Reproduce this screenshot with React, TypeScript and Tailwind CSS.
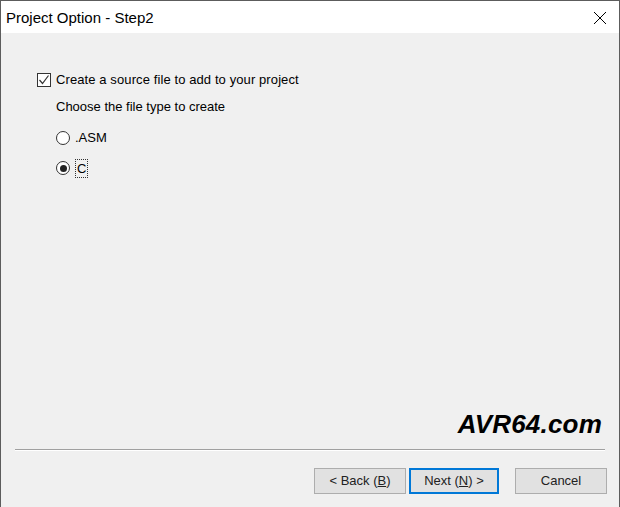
export default function App() {
  return (
    <div className="w-[620px] h-[507px] flex flex-col bg-[#f0f0f0] border-l border-r border-t border-[#5c5c5c] font-['Liberation_Sans',sans-serif] text-[12px] text-black overflow-hidden">
      {/* Title bar */}
      <div className="h-[32px] shrink-0 bg-white flex items-center justify-between pl-[5px] pr-[12px]">
        <span className="text-[15px] font-['Liberation_Sans',sans-serif] leading-none">Project Option - Step2</span>
        <svg width="14" height="14" viewBox="0 0 14 14" className="mt-[1px]">
          <path d="M1 1 L13 13 M13 1 L1 13" stroke="#000" strokeWidth="1" fill="none" />
        </svg>
      </div>

      {/* Body */}
      <div className="flex-1 flex flex-col">
        <div className="pl-[36px] pt-[38px] flex flex-col">
          <label className="flex items-center gap-[5px] h-[18px]">
            <span className="w-[14px] h-[14px] border border-[#333] bg-white flex items-center justify-center">
              <svg width="12" height="12" viewBox="0 0 12 12">
                <path d="M1.5 6 L4.5 9.5 L10.5 1.5" stroke="#333" strokeWidth="1.2" fill="none" />
              </svg>
            </span>
            <span className="text-[13px] tracking-[0.1px]">Create a source file to add to your project</span>
          </label>

          <div className="pl-[19px] mt-[9px] text-[13px] h-[18px] flex items-center">Choose the file type to create</div>

          <div className="pl-[19px] mt-[12px] flex items-center gap-[5px] h-[20px]">
            <span className="w-[14px] h-[14px] rounded-full border border-[#333] bg-white" />
            <span className="text-[13px]">.ASM</span>
          </div>

          <div className="pl-[19px] mt-[10px] flex items-center gap-[5px] h-[20px]">
            <span className="w-[14px] h-[14px] rounded-full border border-[#333] bg-white flex items-center justify-center">
              <span className="w-[7px] h-[7px] rounded-full bg-[#222]" />
            </span>
            <span className="text-[13px] border border-dotted border-[#333] px-[1px] leading-[17px]">C</span>
          </div>
        </div>

        <div className="flex-1" />

        {/* Watermark */}
        <div className="flex justify-end pr-[17px]">
          <span className="font-['Liberation_Sans',sans-serif] font-bold italic text-[26px] leading-none tracking-[0.2px]">AVR64.com</span>
        </div>

        {/* Separator */}
        <div className="mx-[14px] mt-[12px] border-t border-[#a0a0a0] border-b border-b-white" />

        {/* Buttons */}
        <div className="flex justify-end pr-[12px] pt-[17px] pb-[13px] gap-[3px]">
          <button className="w-[92px] h-[26px] bg-[#e1e1e1] border border-[#adadad] text-[13px] text-[#222]">
            &lt; Back (<span className="underline">B</span>)
          </button>
          <button className="w-[90px] h-[26px] bg-[#e1e1e1] border-2 border-[#0078d7] text-[13px] text-[#222]">
            Next (<span className="underline">N</span>) &gt;
          </button>
          <button className="ml-[13px] w-[92px] h-[26px] bg-[#e1e1e1] border border-[#adadad] text-[13px] text-[#222]">
            Cancel
          </button>
        </div>
      </div>
    </div>
  );
}
